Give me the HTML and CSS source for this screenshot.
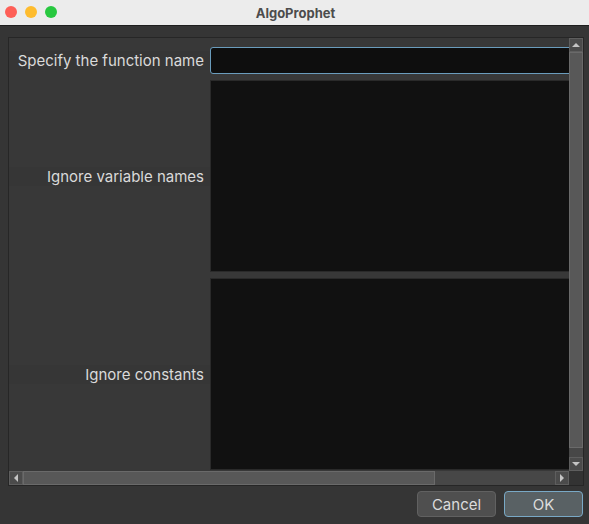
FILE: index.html
```html
<!DOCTYPE html>
<html>
<head>
<meta charset="utf-8">
<link rel="stylesheet" href="styles.css">
</head>
<body>
<div class="window">
  <div class="titlebar">
    <div class="lights">
      <span class="light red"></span>
      <span class="light yellow"></span>
      <span class="light green"></span>
    </div>
    <div class="title">AlgoProphet</div>
  </div>
  <div class="content">
    <div class="pane">
      <div class="view">
        <div class="row row-field">
          <div class="label">Specify the function name</div>
          <div class="textfield"></div>
        </div>
        <div class="row row-area">
          <div class="label">Ignore variable names</div>
          <div class="textarea"></div>
        </div>
        <div class="row row-area2">
          <div class="label">Ignore constants</div>
          <div class="textarea"></div>
        </div>
      </div>
      <div class="vscroll">
        <div class="sbtn"><span class="arr up"></span></div>
        <div class="vthumb"></div>
        <div class="vtrack"></div>
        <div class="sbtn"><span class="arr down"></span></div>
      </div>
      <div class="hscroll">
        <div class="sbtn"><span class="arr left"></span></div>
        <div class="hthumb"></div>
        <div class="htrack"></div>
        <div class="sbtn"><span class="arr right"></span></div>
      </div>
      <div class="corner"></div>
    </div>
    <div class="footer">
      <button class="btn">Cancel</button>
      <button class="btn btn-default">OK</button>
    </div>
  </div>
</div>
</body>
</html>
```
FILE: styles.css
```css
html, body {
  margin: 0;
  padding: 0;
}
body {
  width: 589px;
  height: 524px;
  background: #353535;
  font-family: Inter, "Noto Sans", "DejaVu Sans", sans-serif;
  overflow: hidden;
}
.window {
  display: flex;
  flex-direction: column;
  height: 524px;
}
.titlebar {
  height: 25px;
  background: #ececec;
  border-bottom: 1px solid #1e1e1e;
  position: relative;
  display: flex;
  align-items: center;
  justify-content: center;
}
.lights {
  position: absolute;
  left: 5px;
  top: 6px;
  display: flex;
  gap: 8px;
}
.light {
  width: 12px;
  height: 12px;
  border-radius: 50%;
  display: block;
}
.red { background: #fe5f57; }
.yellow { background: #febc2e; }
.green { background: #28c840; }
.title {
  font-size: 13px;
  font-weight: 700;
  color: #4c4c4c;
  margin-left: 2px;
}
.content {
  padding: 11px 5px 0 8px;
  display: flex;
  flex-direction: column;
}
.pane {
  width: 574px;
  height: 447px;
  border: 1px solid #262626;
  display: grid;
  grid-template-columns: 560px 14px;
  grid-template-rows: 433px 14px;
  background: #383838;
}
.view {
  overflow: hidden;
  display: flex;
  flex-direction: column;
  padding-top: 9px;
  box-sizing: border-box;
  gap: 6px;
}
.row {
  display: flex;
  align-items: center;
  flex: none;
}
.label {
  width: 201px;
  flex: none;
  box-sizing: border-box;
  padding-right: 6px;
  text-align: right;
  font-size: 15px;
  color: #dadada;
  white-space: nowrap;
  background: #363636;
}
.row-field { height: 27px; }
.row-area { height: 192px; }
.row-area2 { height: 192px; }
.textfield {
  width: 420px;
  height: 27px;
  box-sizing: border-box;
  flex: none;
  background: #0e0e0e;
  border: 1px solid #6a9cbc;
  border-radius: 3px;
}
.textarea {
  width: 420px;
  height: 100%;
  box-sizing: border-box;
  flex: none;
  background: #111111;
  border: 1px solid #2a2a2a;
}
.vscroll {
  display: flex;
  flex-direction: column;
  background: #474747;
}
.hscroll {
  display: flex;
  background: #474747;
}
.corner {
  background: #333333;
}
.sbtn {
  width: 14px;
  height: 14px;
  flex: none;
  box-sizing: border-box;
  background: #4b4b4b;
  border: 1px solid #5e5e5e;
  display: flex;
  align-items: center;
  justify-content: center;
}
.vthumb {
  height: 396px;
  box-sizing: border-box;
  background: #585858;
  border: 1px solid #6a6a6a;
  flex: none;
}
.vtrack { flex: 1; }
.hthumb {
  width: 412px;
  margin-left: 0;
  box-sizing: border-box;
  background: #585858;
  border: 1px solid #6a6a6a;
  flex: none;
}
.htrack { flex: 1; }
.arr {
  width: 0;
  height: 0;
  display: block;
}
.arr.up {
  border-left: 4px solid transparent;
  border-right: 4px solid transparent;
  border-bottom: 4px solid #c4c4c4;
}
.arr.down {
  border-left: 4px solid transparent;
  border-right: 4px solid transparent;
  border-top: 4px solid #c4c4c4;
}
.arr.left {
  border-top: 4px solid transparent;
  border-bottom: 4px solid transparent;
  border-right: 4px solid #c4c4c4;
}
.arr.right {
  border-top: 4px solid transparent;
  border-bottom: 4px solid transparent;
  border-left: 4px solid #c4c4c4;
}
.footer {
  display: flex;
  justify-content: flex-end;
  gap: 8px;
  padding-top: 5px;
  padding-right: 1px;
}
.btn {
  width: 79px;
  height: 26px;
  margin: 0;
  padding: 0;
  box-sizing: border-box;
  font-family: Inter, "Noto Sans", "DejaVu Sans", sans-serif;
  font-size: 15px;
  color: #dcdcdc;
  background: #4f4f4f;
  border: 1px solid #616161;
  border-radius: 4px;
}
.btn-default {
  background: #596164;
  border-color: #79a9c6;
}
```
